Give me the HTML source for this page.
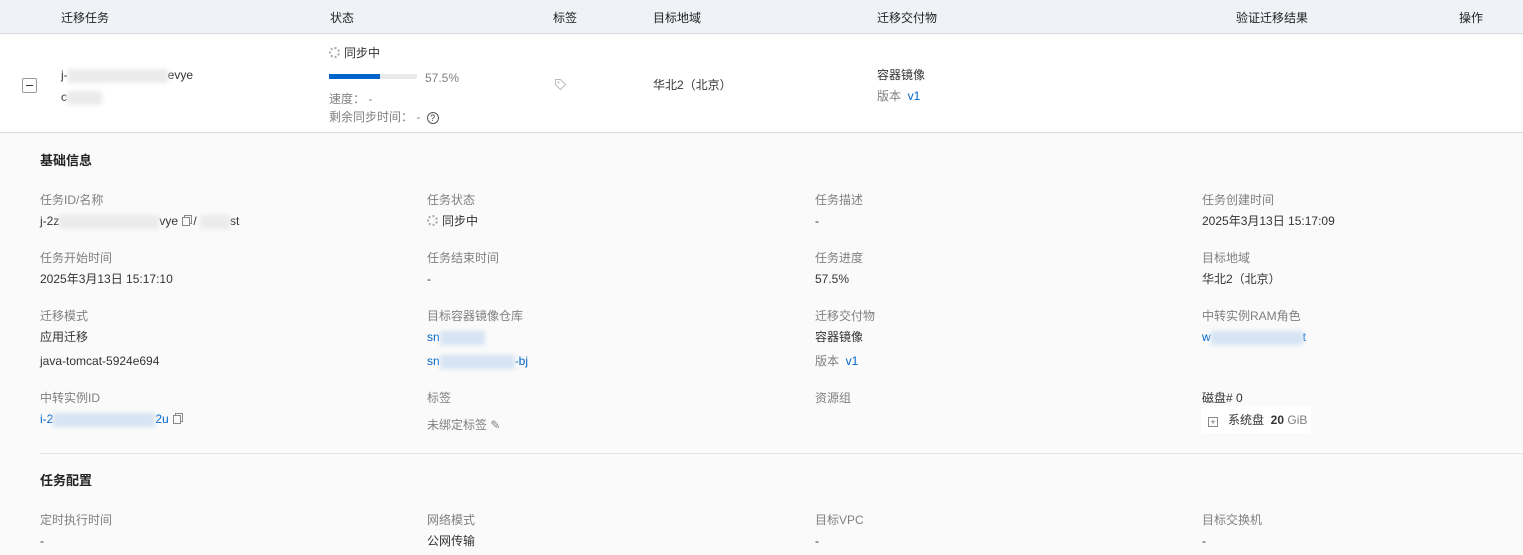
<!DOCTYPE html><html><head><meta charset="utf-8"><style>
*{margin:0;padding:0;box-sizing:border-box}
body{width:1523px;height:555px;overflow:hidden;background:#fafafa;font-family:"Liberation Sans","Noto Sans CJK SC",sans-serif;font-size:12px;color:#333;position:relative}
.a{position:absolute;white-space:nowrap;line-height:16px}
.g{color:#808080}.b{color:#0064c8}.k{color:#222}
.bl{display:inline-block;height:14px;vertical-align:middle;background:#ebebeb;filter:blur(2px)}
.bb{background:#d6e4f3}
.sp{display:inline-block;width:11px;height:11px;border:2px dotted #aaa;border-radius:50%;vertical-align:-1px;margin-right:4px}
.cp{display:inline-block;width:8px;height:9px;border:1px solid #888;vertical-align:-1px;margin-left:4px;box-shadow:2px -2px 0 -1px #fafafa,2px -2px 0 0 #888}
</style></head><body>
<div style="position:absolute;left:0;top:0;width:1523px;height:34px;background:#eff2f6;border-bottom:1px solid #d6d9de"></div>
<div style="position:absolute;left:0;top:35px;width:1523px;height:98px;background:#fff;border-bottom:1px solid #d6d9de"></div>
<div class="a k" style="left:61px;top:10px">迁移任务</div>
<div class="a k" style="left:330px;top:10px">状态</div>
<div class="a k" style="left:553px;top:10px">标签</div>
<div class="a k" style="left:653px;top:10px">目标地域</div>
<div class="a k" style="left:877px;top:10px">迁移交付物</div>
<div class="a k" style="left:1236px;top:10px">验证迁移结果</div>
<div class="a k" style="left:1459px;top:10px">操作</div>
<div style="position:absolute;left:22px;top:78px;width:15px;height:15px;border:1px solid #999;border-radius:2px;background:#fff"><div style="position:absolute;left:3px;top:6px;width:7px;height:1px;background:#333"></div></div>
<div class="a" style="left:61px;top:67px">j-<span class="bl" style="width:100px"></span>evye</div>
<div class="a" style="left:61px;top:89px">c<span class="bl" style="width:35px"></span></div>
<div class="a" style="left:329px;top:45px"><span class="sp"></span>同步中</div>
<div style="position:absolute;left:329px;top:74px;width:88px;height:5px;background:#eaeaea"><div style="width:51px;height:5px;background:#0064c8"></div></div>
<div class="a g" style="left:425px;top:70px">57.5%</div>
<div class="a g" style="left:329px;top:91px">速度： -</div>
<div class="a g" style="left:329px;top:109px">剩余同步时间： - <span style="display:inline-block;width:12px;height:12px;border:1px solid #555;border-radius:50%;font-size:9px;line-height:10px;text-align:center;color:#333;margin-left:3px">?</span></div>
<svg style="position:absolute;left:554px;top:78px" width="13" height="13" viewBox="0 0 13 13"><path d="M1.5 1.5h5l5 5-5 5-5-5z" fill="none" stroke="#bbb"/><circle cx="4.5" cy="4.5" r="1" fill="#bbb"/></svg>
<div class="a" style="left:653px;top:77px">华北2（北京）</div>
<div class="a" style="left:877px;top:67px">容器镜像</div>
<div class="a g" style="left:877px;top:88px">版本 <span class="b">&nbsp;v1</span></div>

<div class="a k" style="left:40px;top:153px;font-weight:bold;font-size:13px">基础信息</div>
<div class="a g" style="left:40px;top:192px">任务ID/名称</div>
<div class="a" style="left:40px;top:213px">j-2z<span class="bl" style="width:100px"></span>vye<span class="cp"></span> / <span class="bl" style="width:30px"></span>st</div>
<div class="a g" style="left:427px;top:192px">任务状态</div>
<div class="a" style="left:427px;top:213px"><span class="sp"></span>同步中</div>
<div class="a g" style="left:815px;top:192px">任务描述</div>
<div class="a" style="left:815px;top:213px">-</div>
<div class="a g" style="left:1202px;top:192px">任务创建时间</div>
<div class="a" style="left:1202px;top:213px">2025年3月13日 15:17:09</div>

<div class="a g" style="left:40px;top:250px">任务开始时间</div>
<div class="a" style="left:40px;top:271px">2025年3月13日 15:17:10</div>
<div class="a g" style="left:427px;top:250px">任务结束时间</div>
<div class="a" style="left:427px;top:271px">-</div>
<div class="a g" style="left:815px;top:250px">任务进度</div>
<div class="a" style="left:815px;top:271px">57.5%</div>
<div class="a g" style="left:1202px;top:250px">目标地域</div>
<div class="a" style="left:1202px;top:271px">华北2（北京）</div>

<div class="a g" style="left:40px;top:308px">迁移模式</div>
<div class="a" style="left:40px;top:329px">应用迁移</div>
<div class="a" style="left:40px;top:353px">java-tomcat-5924e694</div>
<div class="a g" style="left:427px;top:308px">目标容器镜像仓库</div>
<div class="a b" style="left:427px;top:329px">sn<span class="bl bb" style="width:45px"></span></div>
<div class="a b" style="left:427px;top:353px">sn<span class="bl bb" style="width:75px"></span>-bj</div>
<div class="a g" style="left:815px;top:308px">迁移交付物</div>
<div class="a" style="left:815px;top:329px">容器镜像</div>
<div class="a g" style="left:815px;top:353px">版本 <span class="b">&nbsp;v1</span></div>
<div class="a g" style="left:1202px;top:308px">中转实例RAM角色</div>
<div class="a b" style="left:1202px;top:329px">w<span class="bl bb" style="width:92px"></span>t</div>

<div class="a g" style="left:40px;top:390px">中转实例ID</div>
<div class="a b" style="left:40px;top:411px">i-2<span class="bl bb" style="width:102px"></span>2u<span class="cp"></span></div>
<div class="a g" style="left:427px;top:390px">标签</div>
<div class="a g" style="left:427px;top:417px">未绑定标签 ✎</div>
<div class="a g" style="left:815px;top:390px">资源组</div>
<div class="a" style="left:1202px;top:390px">磁盘# 0</div>
<div style="position:absolute;left:1201px;top:406px;width:110px;height:27px;background:#fff"></div>
<div class="a" style="left:1208px;top:412px"><span style="display:inline-block;width:10px;height:10px;border:1px solid #888;font-size:9px;line-height:8px;text-align:center;color:#666;vertical-align:-1px">+</span>&nbsp;&nbsp; 系统盘 &nbsp;<b>20</b> <span class="g">GiB</span></div>
<div style="position:absolute;left:40px;top:453px;width:1483px;height:1px;background:#e5e5e5"></div>

<div class="a k" style="left:40px;top:473px;font-weight:bold;font-size:13px">任务配置</div>
<div class="a g" style="left:40px;top:512px">定时执行时间</div>
<div class="a" style="left:40px;top:533px">-</div>
<div class="a g" style="left:427px;top:512px">网络模式</div>
<div class="a" style="left:427px;top:533px">公网传输</div>
<div class="a g" style="left:815px;top:512px">目标VPC</div>
<div class="a" style="left:815px;top:533px">-</div>
<div class="a g" style="left:1202px;top:512px">目标交换机</div>
<div class="a" style="left:1202px;top:533px">-</div>
</body></html>
